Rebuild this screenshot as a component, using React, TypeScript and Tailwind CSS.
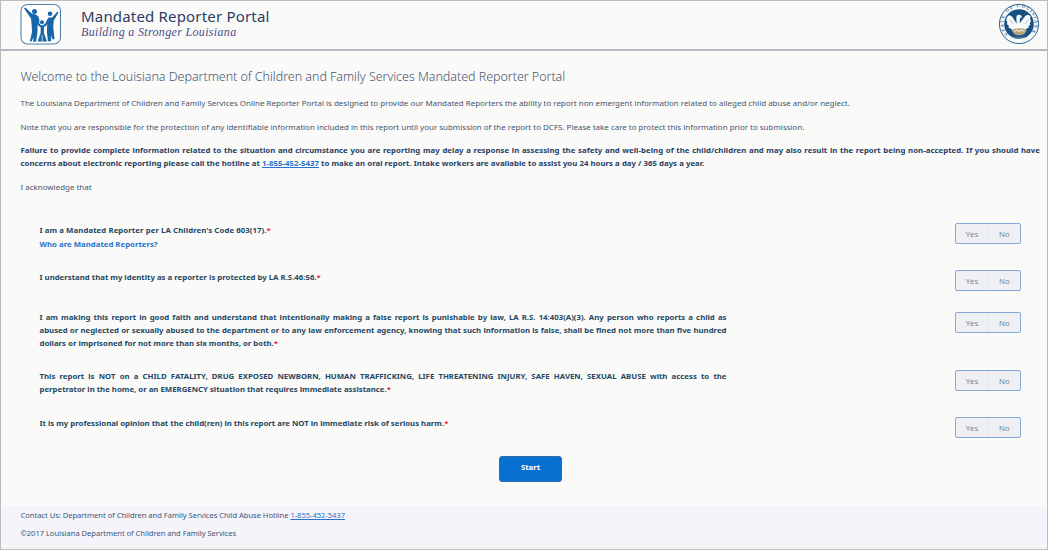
import type { ReactNode } from "react";

function FamilyLogo() {
  return (
    <svg className="h-[42px] w-[42px] shrink-0" viewBox="0 0 42 42" fill="none">
      <rect x="1" y="1.5" width="39.5" height="39.5" rx="6.5" fill="#fff" stroke="#5082ab" strokeWidth="1.1" />
      <g fill="#1767a8">
        <circle cx="14.5" cy="8.4" r="2.5" />
        <circle cx="30" cy="10.8" r="2.3" />
        <circle cx="22" cy="19.2" r="2" />
        <path d="M4 5.2 5.2 4.4 12 10.8l3.8.8 2.3 1.5 1.3 4-.2 3.4 1.6 2.3-1 .9-2.2-2-.1 7-1.4 10h-2.9l.3-4.5-2 4.3H9.8l2.2-9.5-.3-6.5-.7-7z" />
        <path d="m38.6 9.4-4.8 8.1-.6 6 .5 5 .9 7.8h-2.2l-1.3-4v6h-3.2l-1-9 .3-8.2-1.8 2.6-1-.7 2.2-5.5 2-3.1h3.6l5.3-5.8z" />
        <path d="m18.8 20.4 2.2 1.8h2.2l2.2-1.9.6.7-2.2 3.8.2 5.5 3 8.1H17.6l3-8.1.1-5.5-2.4-3.8z" />
      </g>
      <path d="M22.2 32v6.5" stroke="#fff" strokeWidth=".7" />
    </svg>
  );
}

function StateSeal() {
  return (
    <svg className="h-[42px] w-[42px] shrink-0" viewBox="0 0 42 42">
      <defs>
        <path id="seal-arc" d="M10 31A15.7 15.7 0 1 1 32 31" />
      </defs>
      <circle cx="21" cy="21" r="19.6" fill="#f7fafb" stroke="#2f6590" strokeWidth="1" />
      <text fontSize="4.5" fontWeight="700" fill="#305f88" fontFamily="Liberation Serif, serif">
        <textPath href="#seal-arc" textLength="71">STATE OF LOUISIANA</textPath>
      </text>
      <circle cx="21" cy="21" r="14.8" fill="#175184" />
      <path d="M9.2 14q1.8-3.3 5-.2l4.5 7-.4-6q.2-3.5 3.3-3 2 .4 2.4 2.6l-2 .6-.3 5.3 5.3-7q3-3 5.5 0l-.3 3 .8 1.6-1.3 2.4.6 1.4-2 1.8.4 1.2-3 1.4-1.2 2.8H15l-1.6-2.8-3-1.6.6-1.4-2.2-2.2.6-1.4-1.3-2.7z" fill="#f6f9f9" />
      <path d="m12 17 3.5 4m15-4-3.5 4" stroke="#7899b0" strokeWidth=".6" fill="none" />
      <path d="m13.5 27 4-1.4h7.2l4.3 1.4-2.5 3.8-2.8 1.5h-5.2l-2.7-1.5z" fill="#b5a27d" />
      <path d="m16 28.3 2.8-1 2.3 1 2.2-1 3.2 1" stroke="#f5edcf" strokeWidth="1.2" fill="none" />
      <path d="M15 33.8q6 1.8 12 0" stroke="#7d9eba" strokeWidth=".6" fill="none" />
    </svg>
  );
}

function Choice() {
  return (
    <div className="flex h-[21px] w-[66px] shrink-0 rounded-[2px] border border-[#82a9d9] bg-[#eef0f3] text-center text-[7.8px] leading-[20px] tracking-[0.1px] text-[#7b8294]">
      <button className="w-[33px] border-r border-[#e2e5ea]">Yes</button>
      <button className="flex-1">No</button>
    </div>
  );
}

function Question({ className, children, choiceClass = "" }: { className: string; children: ReactNode; choiceClass?: string }) {
  return (
    <div className={`flex shrink-0 items-start justify-between pl-[19px] pr-[19px] ${className}`}>
      <div className="w-[687px] whitespace-nowrap pt-px text-[7.8px] font-bold leading-[12.8px] text-[#254863]">{children}</div>
      <div className={choiceClass}><Choice /></div>
    </div>
  );
}

const Required = () => <span className="text-[#e32636]">*</span>;
const Phone = () => <a className="text-[#2675cb] underline" href="tel:18554525437">1-855-452-5437</a>;

export default function App() {
  return (
    <div className="flex h-[550px] w-[1048px] flex-col overflow-hidden border border-[#bcbcc0] bg-[#fafaf9] font-['Noto_Sans',sans-serif] text-[#47556f]">
      <header className="flex h-[50px] shrink-0 items-start border-b-2 border-[#b5b7c2] pl-[19px] pr-[7px] pt-[2px]">
        <FamilyLogo />
        <div className="ml-[19px] flex-1 pt-[3px]">
          <h1 className="whitespace-nowrap text-[15px] leading-[20px] tracking-[0.18px] text-[#2d3c66]">Mandated Reporter Portal</h1>
          <p className="whitespace-nowrap font-['Liberation_Serif',serif] text-[12px] italic leading-[13px] tracking-[0.33px] text-[#4b4e86]">Building a Stronger Louisiana</p>
        </div>
        <StateSeal />
      </header>

      <main className="flex h-[454.5px] shrink-0 flex-col pl-[19.5px] pr-[7px]">
        <h2 className="mt-[16px] whitespace-nowrap text-[12.5px] font-light leading-[20px] tracking-[-0.04px]">Welcome to the Louisiana Department of Children and Family Services Mandated Reporter Portal</h2>
        <p className="mt-[9px] whitespace-nowrap text-[7.96px] leading-[13px]">The Louisiana Department of Children and Family Services Online Reporter Portal is designed to provide our Mandated Reporters the ability to report non emergent information related to alleged child abuse and/or neglect.</p>
        <p className="mt-[11px] whitespace-nowrap text-[7.96px] leading-[13px]">Note that you are responsible for the protection of any identifiable information included in this report until your submission of the report to DCFS. Please take care to protect this information prior to submission.</p>
        <div className="mt-[11px] text-[7.8px] font-bold leading-[12.5px] tracking-[0.034px] text-[#294063]">
          <p className="whitespace-nowrap [text-align-last:justify]">Failure to provide complete information related to the situation and circumstance you are reporting may delay a response in assessing the safety and well-being of the child/children and may also result in the report being non-accepted. If you should have</p>
          <p className="whitespace-nowrap">concerns about electronic reporting please call the hotline at <Phone /> to make an oral report. Intake workers are available to assist you 24 hours a day / 365 days a year.</p>
        </div>
        <p className="mt-[11px] text-[7.96px] leading-[13px]">I acknowledge that</p>

        <Question className="mt-[30px] h-[47px]">
          <p className="tracking-[0.075px]">I am a Mandated Reporter per LA Children's Code 603(17).<Required /></p>
          <a className="mt-px block text-[#2675cb]" href="#reporters">Who are Mandated Reporters?</a>
        </Question>
        <Question className="h-[40px]">
          <p>I understand that my identity as a reporter is protected by LA R.S.46:56.<Required /></p>
        </Question>
        <Question className="h-[59px]" choiceClass="pt-[2px]">
          <p className="[text-align-last:justify]">I am making this report in good faith and understand that intentionally making a false report is punishable by law, LA R.S. 14:403(A)(3). Any person who reports a child as</p>
          <p className="[text-align-last:justify]">abused or neglected or sexually abused to the department or to any law enforcement agency, knowing that such information is false, shall be fined not more than five hundred</p>
          <p>dollars or imprisoned for not more than six months, or both.<Required /></p>
        </Question>
        <Question className="h-[47px]" choiceClass="pt-px">
          <p className="[text-align-last:justify]">This report is NOT on a CHILD FATALITY, DRUG EXPOSED NEWBORN, HUMAN TRAFFICKING, LIFE THREATENING INJURY, SAFE HAVEN, SEXUAL ABUSE with access to the</p>
          <p>perpetrator in the home, or an EMERGENCY situation that requires immediate assistance.<Required /></p>
        </Question>
        <Question className="h-[40px]" choiceClass="pt-px">
          <p>It is my professional opinion that the child(ren) in this report are NOT in immediate risk of serious harm.<Required /></p>
        </Question>
        <button className="ml-[478.5px] h-[26px] w-[63px] shrink-0 rounded-[3px] border border-[#356ca8] bg-[#0870d1] pb-[2px] text-[7.8px] font-bold text-white">Start</button>
      </main>

      <footer className="h-[40px] shrink-0 bg-[#f4f4fa] pl-[19.5px] pt-[3.5px] text-[7.6px] leading-[13px] tracking-[-0.04px] text-[#405775]">
        <p>Contact Us: Department of Children and Family Services Child Abuse Hotline <Phone /></p>
        <p className="mt-[5px]">©2017 Louisiana Department of Children and Family Services</p>
      </footer>
      <div className="mt-[1.5px] h-px shrink-0 bg-[#ececee]" />
    </div>
  );
}
